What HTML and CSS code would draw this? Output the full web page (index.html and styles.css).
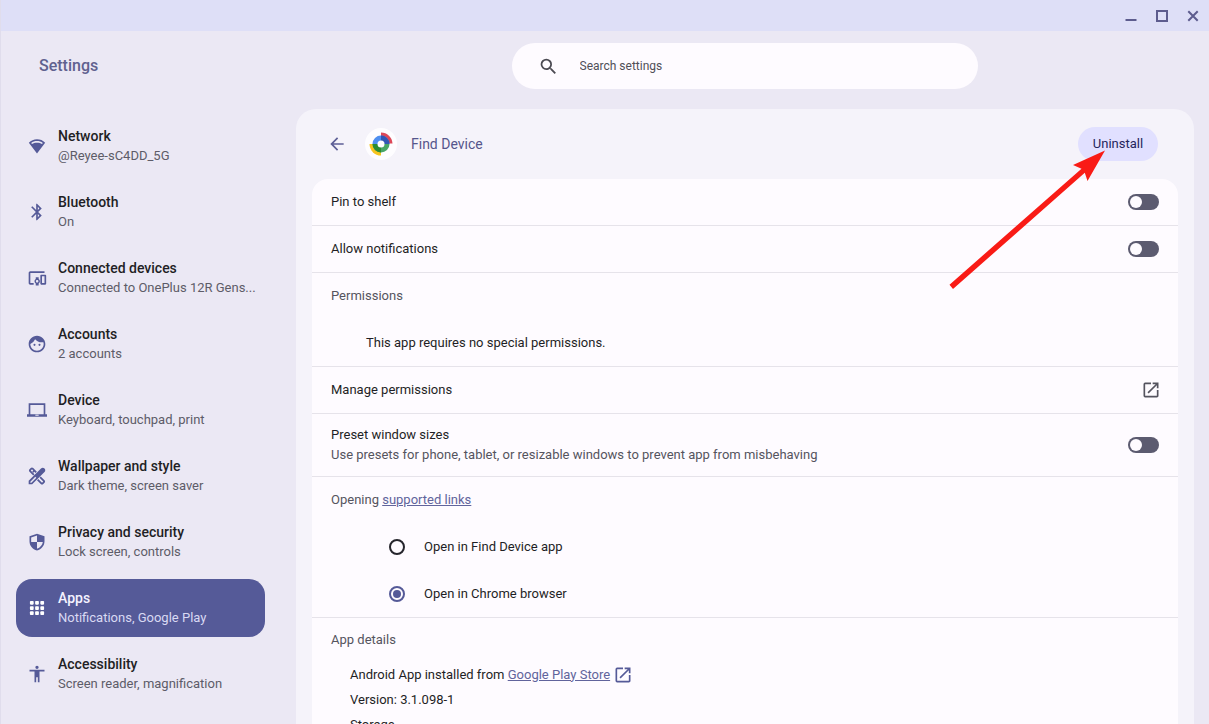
FILE: index.html
```html
<!DOCTYPE html>
<html lang="en">
<head>
<meta charset="utf-8">
<meta name="viewport" content="width=device-width, initial-scale=1">
<title>Settings</title>
<link rel="stylesheet" href="styles.css">
</head>
<body>
<div class="window">
  <div class="titlebar">
    <button class="window-button" aria-label="Minimize"><svg width="12" height="12" viewBox="0 0 12 12"><path d="M0.500 10H11.500" /></svg></button>
    <button class="window-button" aria-label="Maximize"><svg width="12" height="12" viewBox="0 0 12 12"><rect x="1" y="1" width="10" height="10" /></svg></button>
    <button class="window-button" aria-label="Close"><svg width="12" height="12" viewBox="0 0 12 12"><path d="M1.300 1.300L10.700 10.700M10.700 1.300L1.300 10.700" /></svg></button>
  </div>

  <header class="toolbar">
    <h1 class="toolbar-title">Settings</h1>
    <div class="toolbar-search">
      <label class="search">
        <svg class="search-icon" width="21" height="21" viewBox="0 0 24 24"><path d="M15.500 14h-.79l-.28-.27A6.470 6.470 0 0 0 16 9.500 6.500 6.500 0 1 0 9.500 16c1.610 0 3.090-.59 4.230-1.570l.27.28v.79l5 4.990L20.490 19l-4.990-5zm-6 0C7.010 14 5 11.990 5 9.500S7.010 5 9.500 5 14 7.010 14 9.500 11.990 14 9.500 14z"/></svg>
        <input class="search-input" type="text" placeholder="Search settings" aria-label="Search settings">
      </label>
    </div>
  </header>

  <div class="content">
    <nav class="menu" aria-label="Settings sections">
      <a class="menu-item" href="#network">
        <svg class="menu-icon" viewBox="0 0 24 24"><path fill-rule="evenodd" d="M12 4C8.200 4 4.800 5.500 2.200 8L12 21 21.800 8A14.500 14.500 0 0 0 12 4zM5 8.300C7 6.800 9.400 6 12 6s5 .8 7 2.300l-1 1.300C16.300 8.500 14.200 8 12 8s-4.300.500-6 1.600z"/></svg>
        <span class="menu-text"><span class="menu-label">Network</span><span class="menu-note">@Reyee-sC4DD_5G</span></span>
      </a>
      <a class="menu-item" href="#bluetooth">
        <svg class="menu-icon" viewBox="0 0 24 24"><path d="M17.710 7.710L12 2h-1v7.590L6.410 5 5 6.410 10.590 12 5 17.590 6.410 19 11 14.410V22h1l5.710-5.710-4.300-4.290 4.300-4.290zM13 5.830l1.880 1.880L13 9.590V5.830zm1.880 10.460L13 18.170v-3.760l1.880 1.880z"/></svg>
        <span class="menu-text"><span class="menu-label">Bluetooth</span><span class="menu-note">On</span></span>
      </a>
      <a class="menu-item" href="#devices">
        <svg class="menu-icon" viewBox="0 0 24 24"><path d="M4 6h17V4H4c-1.100 0-2 .9-2 2v12c0 1.100.9 2 2 2h4v-2H4V6zm10 5h-3.500v2.300c-.9.600-1.500 1.600-1.500 2.700s.6 2.100 1.500 2.700V21H14v-2.300c.9-.6 1.500-1.600 1.500-2.700s-.6-2.100-1.500-2.700V11zm-1.800 6.500c-.83 0-1.500-.67-1.500-1.500s.67-1.500 1.500-1.500 1.500.67 1.500 1.500-.67 1.500-1.500 1.500zM22 8h-5c-.5 0-1 .5-1 1v10c0 .5.500 1 1 1h5c.5 0 1-.5 1-1V9c0-.5-.5-1-1-1zm-1 10h-3v-8h3v8z"/></svg>
        <span class="menu-text"><span class="menu-label">Connected devices</span><span class="menu-note">Connected to OnePlus 12R Gens...</span></span>
      </a>
      <a class="menu-item" href="#accounts">
        <svg class="menu-icon" viewBox="0 0 24 24"><path d="M10.250 13a1.250 1.250 0 1 1-2.500 0 1.250 1.250 0 0 1 2.500 0zM15 11.750a1.250 1.250 0 1 0 0 2.500 1.250 1.250 0 0 0 0-2.500zm7 .25c0 5.520-4.480 10-10 10S2 17.520 2 12 6.480 2 12 2s10 4.480 10 10zm-2 0c0-.78-.12-1.530-.33-2.240-.7.150-1.420.240-2.170.240a10 10 0 0 1-7.760-3.690A10.020 10.020 0 0 1 4 11.860c.01.040 0 .09 0 .14 0 4.410 3.590 8 8 8s8-3.590 8-8z"/></svg>
        <span class="menu-text"><span class="menu-label">Accounts</span><span class="menu-note">2 accounts</span></span>
      </a>
      <a class="menu-item" href="#device">
        <svg class="menu-icon" viewBox="0 0 24 24"><path fill-rule="evenodd" d="M2 4h20v13h2v3H0v-3h2zM4 6v11h16V6zM10 17.800v1h4v-1z"/></svg>
        <span class="menu-text"><span class="menu-label">Device</span><span class="menu-note">Keyboard, touchpad, print</span></span>
      </a>
      <a class="menu-item" href="#wallpaper">
        <svg class="menu-icon" viewBox="0 0 24 24"><path d="M16.500 12.500l-1.500 1.500 4.500 4.500-1.500 1.500-4.500-4.500-1.500 1.500 4.500 4.500c.9.900 2.200.9 3 0l1.500-1.500c.9-.9.900-2.200 0-3z"/><path d="M7.500 11.500L9 10 4.500 5.500 6 4l1.500 1.500-1.200 1.200 1.300 1.300 1.200-1.200L10.300 8.300 11.800 6.800 7.500 2.500c-.9-.9-2.200-.9-3 0L3 4c-.9.900-.9 2.200 0 3z"/><path fill-rule="evenodd" d="M2 17.800L16.800 3c1.200-1.200 3-1.200 4.200 0s1.200 3 0 4.200L6.200 22H2zm2 1V20h1.300l5.900-5.900-1.300-1.300z"/></svg>
        <span class="menu-text"><span class="menu-label">Wallpaper and style</span><span class="menu-note">Dark theme, screen saver</span></span>
      </a>
      <a class="menu-item" href="#privacy">
        <svg class="menu-icon" viewBox="0 0 24 24"><path fill-rule="evenodd" d="M12 2L3 5.200V11c0 5.300 3.600 9.600 9 11.300 5.400-1.700 9-6 9-11.300V5.200zM12 4.200V12h7c-.5 3.700-3.200 6.800-7 8.100V12H5V6.600z"/></svg>
        <span class="menu-text"><span class="menu-label">Privacy and security</span><span class="menu-note">Lock screen, controls</span></span>
      </a>
      <a class="menu-item menu-item-active" href="#apps" aria-current="page">
        <svg class="menu-icon" viewBox="0 0 24 24"><g><rect x="3.500" y="3.500" width="4.500" height="4.500" rx="1"/><rect x="9.750" y="3.500" width="4.500" height="4.500" rx="1"/><rect x="16" y="3.500" width="4.500" height="4.500" rx="1"/><rect x="3.500" y="9.750" width="4.500" height="4.500" rx="1"/><rect x="9.750" y="9.750" width="4.500" height="4.500" rx="1"/><rect x="16" y="9.750" width="4.500" height="4.500" rx="1"/><rect x="3.500" y="16" width="4.500" height="4.500" rx="1"/><rect x="9.750" y="16" width="4.500" height="4.500" rx="1"/><rect x="16" y="16" width="4.500" height="4.500" rx="1"/></g></svg>
        <span class="menu-text"><span class="menu-label">Apps</span><span class="menu-note">Notifications, Google Play</span></span>
      </a>
      <a class="menu-item" href="#accessibility">
        <svg class="menu-icon" viewBox="0 0 24 24"><path d="M12 2a2 2 0 1 1 0 4 2 2 0 0 1 0-4zm9 7h-6v13h-2v-6h-2v6H9V9H3V7h18v2z"/></svg>
        <span class="menu-text"><span class="menu-label">Accessibility</span><span class="menu-note">Screen reader, magnification</span></span>
      </a>
    </nav>

    <main class="panel">
      <div class="panel-head">
        <button class="back" aria-label="Back"><svg width="20" height="20" viewBox="0 0 24 24"><path d="M20 11H7.830l5.590-5.590L12 4l-8 8 8 8 1.410-1.410L7.830 13H20v-2z"/></svg></button>
        <svg class="app-logo" width="32" height="32" viewBox="0 0 32 32">
          <circle cx="16" cy="16" r="16" fill="#fefdff"/>
          <path d="M16 4.500A11.500 11.500 0 0 1 27.500 15.500H16z" fill="#dd4858"/>
          <path d="M16 27.500A11.500 11.500 0 0 1 4.500 16H16z" fill="#f6c51f"/>
          <path d="M7.500 16A8.500 8.500 0 0 1 24.500 16z" fill="#4f8ff0"/>
          <path d="M16 7.500A8.500 8.500 0 0 1 24.500 16H16z" fill="#3156b5"/>
          <path d="M7.500 16A8.500 8.500 0 0 0 24.500 16z" fill="#48a566"/>
          <path d="M16 24.500A8.500 8.500 0 0 1 7.500 16H16z" fill="#2a8b35"/>
          <circle cx="16" cy="16" r="3.500" fill="#fefdff"/>
        </svg>
        <h2 class="panel-title">Find Device</h2>
        <div class="uninstall-wrap">
          <button class="uninstall">Uninstall</button>
          <svg class="arrow" width="165" height="144" viewBox="0 0 165 144" aria-hidden="true"><path d="M160 2.500L142.500 33 139.800 24.800 8 141 4.500 136.700 136.500 20.800 128 17z"/></svg>
        </div>
      </div>

      <div class="card">
        <section class="group">
          <label class="row">Pin to shelf<input class="switch" type="checkbox" role="switch"></label>
        </section>
        <section class="group">
          <label class="row">Allow notifications<input class="switch" type="checkbox" role="switch"></label>
        </section>
        <section class="group">
          <h3 class="row heading">Permissions</h3>
          <p class="row indent">This app requires no special permissions.</p>
        </section>
        <section class="group">
          <a class="row" href="#manage">Manage permissions
            <svg class="open-icon" viewBox="0 0 24 24"><path d="M19 19H5V5h7V3H5a2 2 0 0 0-2 2v14a2 2 0 0 0 2 2h14c1.100 0 2-.9 2-2v-7h-2v7zM14 3v2h3.590l-9.830 9.830 1.410 1.410L19 6.410V10h2V3h-7z"/></svg></a>
        </section>
        <section class="group">
          <label class="row row-tall"><span class="stack"><span>Preset window sizes</span><span class="note">Use presets for phone, tablet, or resizable windows to prevent app from misbehaving</span></span><input class="switch" type="checkbox" role="switch"></label>
        </section>
        <section class="group">
          <h3 class="row heading"><span>Opening <a class="link" href="#links">supported links</a></span></h3>
          <label class="row choice"><input class="radio" type="radio" name="opening">Open in Find Device app</label>
          <label class="row choice"><input class="radio" type="radio" name="opening" checked>Open in Chrome browser</label>
        </section>
        <section class="group">
          <h3 class="row heading">App details</h3>
          <div class="details">
            <p class="detail">Android App installed from <a class="link" href="#store">Google Play Store</a><svg class="open-icon open-icon-link" viewBox="0 0 24 24"><path d="M19 19H5V5h7V3H5a2 2 0 0 0-2 2v14a2 2 0 0 0 2 2h14c1.100 0 2-.9 2-2v-7h-2v7zM14 3v2h3.590l-9.830 9.830 1.410 1.410L19 6.410V10h2V3h-7z"/></svg></p>
            <p class="detail">Version: 3.1.098-1</p>
            <p class="detail">Storage</p>
          </div>
        </section>
      </div>
    </main>
  </div>
</div>
</body>
</html>
```
FILE: styles.css
```css
* {
  box-sizing: border-box;
}

body {
  margin: 0;
  background: #ebe8f4;
  color: #1f1f25;
  font-family: Roboto, Inter, sans-serif;
  font-size: 13px;
  line-height: 20px;
}

h1, h2, h3, p {
  margin: 0;
  font-size: inherit;
  font-weight: 400;
}

button {
  padding: 0;
  border: 0;
  background: none;
  font: inherit;
}

a {
  color: inherit;
  text-decoration: none;
}

.window {
  display: flex;
  flex-direction: column;
  height: 100vh;
  overflow: hidden;
  border-left: 1px solid #e0ddec;
}

.titlebar {
  display: flex;
  flex: none;
  justify-content: flex-end;
  align-items: center;
  gap: 19px;
  height: 31px;
  padding-right: 10px;
  background: #dedff7;
}

.window-button {
  display: flex;
}

.window-button svg {
  fill: none;
  stroke: #5d5c8e;
  stroke-width: 2;
}

.toolbar {
  display: flex;
  flex: none;
  align-items: center;
  height: 78px;
  padding-bottom: 8px;
}

.toolbar-title {
  flex: none;
  width: 295px;
  padding-left: 38px;
  color: #60618f;
  font-size: 16px;
  font-weight: 500;
}

.toolbar-search {
  display: flex;
  flex: 1;
  justify-content: center;
  padding-right: 15px;
}

.search {
  display: flex;
  align-items: center;
  gap: 21px;
  width: 52%;
  height: 46px;
  padding: 0 26px;
  border-radius: 23px;
  background: #fefbff;
}

.search-icon {
  flex: none;
  fill: #4b4a52;
}

.search-input {
  flex: 1;
  min-width: 0;
  padding: 0;
  border: 0;
  outline: 0;
  background: none;
  color: inherit;
  font: inherit;
  font-size: 12px;
}

.search-input::placeholder {
  color: #504f58;
  opacity: 1;
}

.content {
  display: flex;
  flex: 1;
  min-height: 0;
}

.menu {
  display: flex;
  flex: none;
  flex-direction: column;
  gap: 8px;
  width: 295px;
  padding: 8px 31px 0 15px;
}

.menu-item {
  display: flex;
  flex: none;
  align-items: center;
  gap: 11px;
  height: 58px;
  padding: 0 11px;
  border-radius: 16px;
}

.menu-icon {
  flex: none;
  width: 20px;
  height: 20px;
  fill: #555a98;
}

.menu-text {
  display: flex;
  flex-direction: column;
  white-space: nowrap;
}

.menu-label {
  font-size: 14px;
  font-weight: 500;
}

.menu-note {
  color: #5d5c68;
}

.menu-item-active {
  background: #555a98;
  color: #f4f2ff;
}

.menu-item-active .menu-icon {
  fill: #ffffff;
}

.menu-item-active .menu-note {
  color: #d9d9f3;
}

.panel {
  flex: 1;
  min-width: 0;
  margin-right: 15px;
  padding: 0 16px;
  border-radius: 20px 20px 0 0;
  background: #f5f3fa;
}

.panel-head {
  display: flex;
  align-items: center;
  height: 70px;
  padding: 0 20px 0 15px;
}

.back {
  display: flex;
  margin-right: 18px;
}

.back svg {
  fill: #5d5f96;
}

.app-logo {
  flex: none;
  margin-right: 14px;
}

.panel-title {
  color: #55568c;
  font-size: 14px;
}

.uninstall-wrap {
  position: relative;
  margin-left: auto;
}

.uninstall {
  display: block;
  width: 80px;
  height: 34px;
  border-radius: 17px;
  background: #e1e0ff;
  color: #25255c;
}

.arrow {
  position: absolute;
  top: 21px;
  left: -133px;
  z-index: 1;
  fill: #f91b16;
  pointer-events: none;
}

.card {
  border-radius: 16px 16px 0 0;
  background: #fefbff;
}

.group + .group {
  border-top: 1px solid #e6e3ea;
}

.row {
  display: flex;
  align-items: center;
  justify-content: space-between;
  height: 46px;
  padding: 0 19px;
}

.row + .row {
  height: 47px;
}

.row-tall {
  height: 62px;
}

.indent {
  padding-left: 54px;
}

.stack {
  display: flex;
  flex-direction: column;
}

.heading, .note {
  color: #55545e;
}

.link {
  color: #61649c;
  text-decoration: underline;
}

.switch {
  display: flex;
  flex: none;
  align-items: center;
  width: 31px;
  height: 16px;
  margin: 0;
  padding: 2px;
  border-radius: 8px;
  background: #5c5b70;
  appearance: none;
}

.switch::before {
  width: 12px;
  height: 12px;
  border-radius: 50%;
  background: #fefbff;
  content: "";
}

.choice {
  justify-content: flex-start;
  gap: 19px;
  padding-left: 77px;
}

.radio {
  display: grid;
  place-items: center;
  width: 16px;
  height: 16px;
  margin: 0;
  border: 2px solid #25252c;
  border-radius: 50%;
  appearance: none;
}

.radio:checked {
  border-color: #555a98;
}

.radio:checked::before {
  width: 8px;
  height: 8px;
  border-radius: 50%;
  background: #555a98;
  content: "";
}

.open-icon {
  flex: none;
  width: 20px;
  height: 20px;
  margin-right: -2px;
  fill: #55545f;
}

.open-icon-link {
  margin: 0 0 0 3px;
  fill: #555a98;
}

.group > .heading:has(+ .details) {
  height: 44px;
}

.details {
  padding: 0 38px;
}

.detail {
  display: flex;
  align-items: center;
  height: 25px;
  white-space: pre;
}
```
